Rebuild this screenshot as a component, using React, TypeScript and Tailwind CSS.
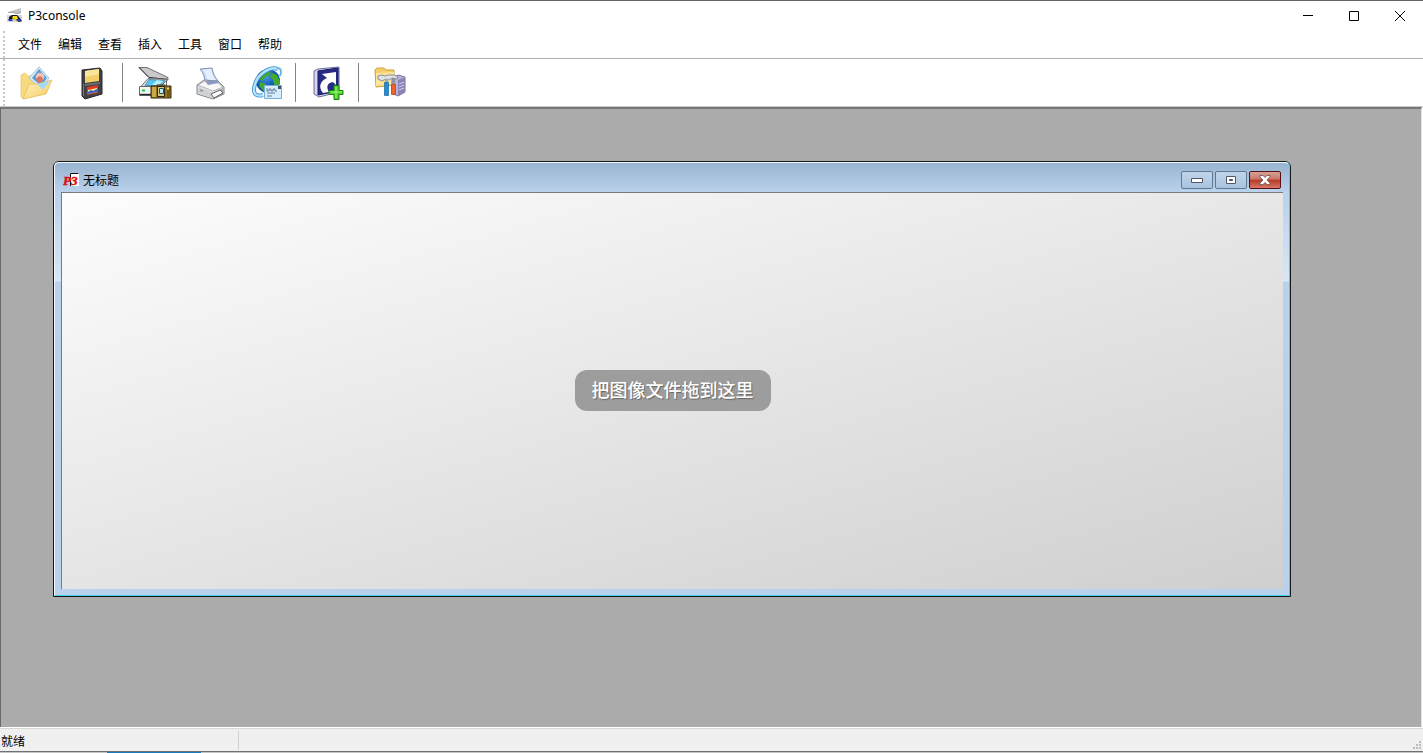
import type { ReactNode } from 'react'

const menus = ['文件', '编辑', '查看', '插入', '工具', '窗口', '帮助']

function AppIcon() {
  return (
    <svg width="16" height="16" viewBox="0 0 16 16">
      <path d="M1 4L14 0v5l-3 1-5-1z" fill="#c4c4c4" />
      <path d="M1 4.5h6l2 1 5-1" fill="none" stroke="#999" strokeWidth=".8" />
      <path d="M0 7h15v7H0z" fill="#d6d6d6" />
      <path d="M2 9l3-2h5l2 2 3 4-3 1-3-2-3-1-4 1z" fill="#16161c" />
      <path d="M6 8h4l1 3-3 1-3-2z" fill="#f3dc18" />
      <path d="M10 11h4v2h-4zM1 11h3l2 2H2z" fill="#2736b8" />
    </svg>
  )
}

function FolderIcon() {
  return (
    <svg width="34" height="36" viewBox="0 0 34 36">
      <defs>
        <linearGradient id="folder" x1="0" y1="0" x2="1" y2="1">
          <stop stopColor="#fff3bd" />
          <stop offset="1" stopColor="#f5cb62" />
        </linearGradient>
      </defs>
      <path d="M2 10l4-2 3 3 10-1v14L5 34l-3-2z" fill="#f8db80" stroke="#e8c469" strokeWidth=".7" />
      <path d="M20 2l10 11-8 11-12-11z" fill="#d9edf9" stroke="#93b7d2" strokeWidth=".8" />
      <path d="M20 4l8 9-6 8-9-8z" fill="#5a9cd8" />
      <circle cx="21" cy="12" r="4.2" fill="#f6c4b2" />
      <path d="M17 15c1-5 7-5 7 0l-3 4z" fill="#d57767" />
      <path d="M4 34l6-15h8l15-4-6 14z" fill="url(#folder)" stroke="#e3bb5c" strokeWidth=".8" />
      <path d="M18 19l13-3-7 9z" fill="#a6d8f7" />
    </svg>
  )
}

function FloppyIcon() {
  return (
    <svg width="26" height="34" viewBox="0 0 26 34">
      <path d="M3 4l18-2 2 3v23L6 33l-3-3z" fill="#414145" stroke="#28282c" />
      <path d="M6 5l14-2v12L6 17z" fill="#f2cf69" />
      <path d="M6 5l14-2v5L6 11z" fill="#fae59d" />
      <path d="M6 18l15-2v2L6 20z" fill="#6d6d72" />
      <path d="M8 21l11-2v8L8 29z" fill="#e13a21" />
      <path d="M9 24l9-2v4l-9 2z" fill="#f8e7a0" />
      <path d="M9 26l3-2 2 1 4-2v3l-9 2z" fill="#355fbd" />
      <path d="M4.5 18v12" stroke="#77777c" />
    </svg>
  )
}

function ScannerIcon() {
  return (
    <svg width="36" height="34" viewBox="0 0 36 34">
      <path d="M2 1.5h8l21 10v2l-19-2z" fill="#c9c9cb" stroke="#555558" strokeWidth=".8" />
      <path d="M2 1.5l10 10 19 2" fill="none" stroke="#333336" />
      <path d="M11 12.5l20 1-7 8H3z" fill="#dededf" stroke="#77777b" />
      <path d="M12 13.5l16 1-5 5H8z" fill="#58c6ed" stroke="#397a99" strokeWidth=".7" />
      <path d="M20 14l6 1-4 4h-7z" fill="#b3efff" />
      <path d="M2.5 20.5h21l6-6v8l-6 7h-21z" fill="#f3f3f4" stroke="#68686c" />
      <path d="M3 28.5h20" stroke="#26262a" strokeWidth="1.4" />
      <path d="M5 24.5h3" stroke="#24c34c" strokeWidth="2" />
      <path d="M14 20h6v-1h8v1h6v12H14z" fill="#94741f" stroke="#332b16" />
      <path d="M15 21h4v10h-4z" fill="#c8a945" />
      <path d="M30 21h3v10h-3z" fill="#765914" />
      <path d="M20.5 20.5h7v10h-7z" fill="#d7c783" stroke="#302713" />
      <path d="M22.5 22.5h4v5h-4z" fill="#b8ecef" stroke="#24575b" />
      <path d="M30 22.5h2" stroke="#f0dd78" strokeWidth="2" />
    </svg>
  )
}

function PrinterIcon() {
  return (
    <svg width="32" height="34" viewBox="0 0 32 34">
      <path d="M5 3l12-1c1 6 3 9 6 13l-12 2C9 12 9 7 5 3z" fill="#c6dcfa" stroke="#8393b5" />
      <path d="M8 4l8-1c1 6 3 8 5 11l-8 1C11 10 11 7 8 4z" fill="#e4f0ff" />
      <path d="M2 19l7-5 14 1 6 6v7l-11 5L2 28z" fill="#dedee2" stroke="#86868c" />
      <path d="M3 19l7-4 12 1 6 5-10 4z" fill="#f7f7f8" stroke="#aaaab0" strokeWidth=".8" />
      <path d="M10 15l12-1 2 3-11 2z" fill="#8a9ac0" />
      <path d="M3 21l15 6v5L3 27z" fill="#cfcfd5" />
      <path d="M18 27l10-5v6l-10 4z" fill="#a4a4ad" />
      <path d="M16 28l9-4 3 3-9 5z" fill="#fafafb" stroke="#62626b" />
      <path d="M5 24l3 1" stroke="#7c9f7d" strokeWidth="1.4" />
    </svg>
  )
}

function GlobeIcon() {
  return (
    <svg width="34" height="36" viewBox="0 0 34 36">
      <defs>
        <radialGradient id="globe" cx="40%" cy="30%">
          <stop stopColor="#4a9eea" />
          <stop offset="1" stopColor="#0b4eaa" />
        </radialGradient>
      </defs>
      <circle cx="18" cy="16" r="12" fill="url(#globe)" />
      <path d="M12 6l6-1 3 3-3 3-3 1-2 4-4-2 1-5zM22 8l5 2 3 6-2 6-4-2-1-5-3-3zM10 17l6 2 1 5-3 3-5-6z" fill="#43a92e" />
      <path d="M28 4C20 1 8 9 5 19s1 13 8 11" fill="none" stroke="#2f8bd0" strokeWidth="4" />
      <path d="M28 4C20 1 8 9 5 19s1 13 8 11" fill="none" stroke="#b5e3fa" strokeWidth="2.4" />
      <path d="M27 3c4 0 5 3 3 8" fill="none" stroke="#65b9e8" strokeWidth="2" />
      <path d="M14.5 20.5h17v13h-17z" fill="#d8edfc" stroke="#78afd4" />
      <path d="M28 21h3v3h-3z" fill="#3f5563" />
      <path d="M17 23v3h2v-2h2v2h2v-2h2v2h2M17 28h8M17 31h5" fill="none" stroke="#607f9e" />
    </svg>
  )
}

function ShortcutIcon() {
  return (
    <svg width="34" height="36" viewBox="0 0 34 36">
      <path d="M3 6l4-2 21-2v25L8 32l-5-3z" fill="#d6d7ec" stroke="#686ba2" />
      <path d="M7 6l20-3v23L7 30z" fill="#282b84" stroke="#151961" />
      <path d="M11 9l14-2v13l-3-3c-6 1-7 5-4 10l-6 1c-5-6-3-12 4-15z" fill="#fff" />
      <path d="M23 20.500h5v5h4v4h-4v5h-5v-5h-5v-4h5z" fill="#4fce2e" stroke="#17850f" />
      <path d="M25 22v11M20 27h11" stroke="#a4fa75" />
    </svg>
  )
}

function ToolsIcon() {
  return (
    <svg width="34" height="34" viewBox="0 0 34 34">
      <path d="M1 4l2-2h7l2 2h8v15L2 21z" fill="#f3cf6b" stroke="#ce9f3c" />
      <path d="M2 7l18-1v12L2 20z" fill="#fce59a" />
      <path d="M18 13l6-4 7 2v15l-7 4-6-3z" fill="#b8b4dc" stroke="#77729f" />
      <path d="M24 14l7-3v15l-7 4z" fill="#8a84b5" />
      <path d="M25 18l5-2M25 21l5-2M25 24l5-2" stroke="#d6d3ed" />
      <path d="M4 10l4-1 3 1 3-1h6l4 2-1 2-5-1-3 2-3-1-4 2-4-2z" fill="#e0e1e5" stroke="#8b8e95" />
      <path d="M11 13h3v4h-3z" fill="#a5abb4" />
      <path d="M10.500 16.500h4v13h-4z" fill="#268bd2" stroke="#15659e" strokeWidth=".7" />
      <path d="M19 12h2v6h-2z" fill="#8b9099" />
      <path d="M17.500 18.500h4v10h-4z" fill="#ef622b" stroke="#aa3e14" strokeWidth=".7" />
    </svg>
  )
}

function DocumentIcon() {
  return (
    <svg width="16" height="16" viewBox="0 0 16 16">
      <path d="M7 1h9v13H7z" fill="#fff" />
      <path d="M7.500 14V1.500h8" fill="none" stroke="#111" />
      <text x="0" y="13" fill="#e00d12" stroke="#e00d12" strokeWidth=".5" fontFamily="Liberation Serif, serif" fontSize="13" fontStyle="italic" fontWeight="700">P3</text>
    </svg>
  )
}

function Separator() {
  return <div className="h-[39px] w-px bg-[#858585]" />
}

function Grip() {
  return <div className="ml-[3px] w-0 self-stretch border-l-2 border-dotted border-[#c8c8c8]" />
}

function ToolButton({ label, children }: { label: string; children: ReactNode }) {
  return (
    <button type="button" aria-label={label} className="flex h-10 w-14 items-center justify-center">
      {children}
    </button>
  )
}

export default function App() {
  return (
    <div className="flex h-screen flex-col border-t border-[#666] bg-white font-['Noto_Sans','Noto_Sans_CJK_SC',sans-serif] text-xs text-black">
      <header className="flex h-[30px] shrink-0 items-center pl-[7px]">
        <AppIcon />
        <h1 className="ml-[5px] grow">P3console</h1>
        <button type="button" aria-label="最小化" className="flex h-full w-[46px] items-center justify-center">
          <svg width="10" height="10" viewBox="0 0 10 10"><path d="M0 4.500h10" stroke="#000" /></svg>
        </button>
        <button type="button" aria-label="最大化" className="flex h-full w-[46px] items-center justify-center">
          <svg width="10" height="10" viewBox="0 0 10 10"><path d="M.5.5h9v9h-9z" fill="none" stroke="#000" /></svg>
        </button>
        <button type="button" aria-label="关闭" className="flex h-full w-[46px] items-center justify-center">
          <svg width="10" height="10" viewBox="0 0 10 10"><path d="M0 0l10 10M10 0L0 10" stroke="#000" /></svg>
        </button>
      </header>

      <nav className="flex h-7 shrink-0 items-center border-b border-[#b0b0b4]">
        <Grip />
        <div className="ml-[5px] flex">
          {menus.map((name) => (
            <button key={name} type="button" className="w-10 text-center">{name}</button>
          ))}
        </div>
      </nav>

      <div className="flex h-12 shrink-0 items-center border-b border-[#c8c8c8]">
        <Grip />
        <div className="ml-[3px] flex items-center">
          <div className="flex pr-[2px]">
            <ToolButton label="打开"><FolderIcon /></ToolButton>
            <ToolButton label="保存"><FloppyIcon /></ToolButton>
          </div>
          <Separator />
          <div className="flex pl-1">
            <ToolButton label="扫描"><ScannerIcon /></ToolButton>
            <ToolButton label="打印"><PrinterIcon /></ToolButton>
            <ToolButton label="发送"><GlobeIcon /></ToolButton>
          </div>
          <Separator />
          <div className="pr-[2px] pl-1">
            <ToolButton label="快捷方式"><ShortcutIcon /></ToolButton>
          </div>
          <Separator />
          <div className="pl-1">
            <ToolButton label="选项"><ToolsIcon /></ToolButton>
          </div>
        </div>
      </div>

      <main className="mr-px flex min-h-0 grow flex-col border-t-2 border-l border-r border-t-[#777] border-r-[#e3e3e3] border-l-[#696969] bg-[#ababab] pt-[52px] pr-[130px] pb-[130px] pl-[52px]">
        <section className="flex min-h-0 grow flex-col rounded-t-md border border-[#151719] bg-[#b9d1ea]">
          <div className="flex grow flex-col rounded-t-[5px] border border-t-[#f2f8fd] border-r-[#3fd0ea] border-b-[#3fd0ea] border-l-[#f2f8fd] bg-[linear-gradient(#99b4d1,#b9d1ea_28px,#d8e6f5_118px,#b9d1ea_119px)] px-[6px] pb-[6px]">
            <div className="flex h-[29px] shrink-0 items-center pt-1 pr-[2px] pl-[2px]">
              <DocumentIcon />
              <h2 className="ml-1 grow pt-[2px]">无标题</h2>
              <div className="flex gap-[2px]">
                <button type="button" aria-label="最小化窗口" className="flex h-[18px] w-8 items-center justify-center rounded-xs border border-[#617891] bg-gradient-to-b from-[#c0d5ea] to-[#a8c3df]">
                  <svg width="12" height="6" viewBox="0 0 12 6"><path d="M.5 1.500h11v4H.5z" fill="#fff" stroke="#535666" /></svg>
                </button>
                <button type="button" aria-label="最大化窗口" className="flex h-[18px] w-8 items-center justify-center rounded-xs border border-[#617891] bg-gradient-to-b from-[#c0d5ea] to-[#a8c3df]">
                  <svg width="12" height="10" viewBox="0 0 12 10"><path d="M1.500 1.500h9v7h-9z" fill="#fff" stroke="#535666" /><path d="M4.500 4.500h3v1h-3z" fill="#9db8d4" stroke="#535666" /></svg>
                </button>
                <button type="button" aria-label="关闭窗口" className="flex h-[18px] w-8 items-center justify-center rounded-xs border border-[#541016] bg-[linear-gradient(#d8a196,#cb7565_45%,#b73825_50%,#d77865)]">
                  <svg width="12" height="10" viewBox="0 0 12 10"><path d="M1 .5h3l2 2 2-2h3v1L8 5l3 3v1.500H8l-2-2-2 2H1V8l3-3-3-3z" fill="#fff" stroke="#61505a" strokeWidth=".8" /></svg>
                </button>
              </div>
            </div>
            <div className="flex grow items-center justify-center border-t border-l border-[#777b80] bg-[linear-gradient(164deg,#fdfdfd,#cfcfcf)] pb-[2px]">
              <p className="rounded-xl bg-[#9d9d9d] px-[17px] pt-[6px] pb-[8px] font-['Noto_Sans_CJK_SC',sans-serif] text-[18px] leading-[27px] font-medium text-white [text-shadow:1px_1px_1px_#666]">
                把图像文件拖到这里
              </p>
            </div>
          </div>
        </section>
      </main>

      <footer className="shrink-0 bg-[#f0f0f0]">
        <div className="h-[2px] border-b border-[#d7d7d7] bg-white" />
        <div className="flex h-[22px] items-center">
          <div className="flex h-[19px] w-[239px] items-center border-r border-[#d0d0d0] pt-[3px] pl-px">就绪</div>
          <div className="grow" />
          <svg className="mt-[10px] mr-[2px]" width="8" height="8" viewBox="0 0 8 8" fill="#bcbcbc">
            <path d="M6 0h2v2H6zM3 3h2v2H3zM6 3h2v2H6zM0 6h2v2H0zM3 6h2v2H3zM6 6h2v2H6z" />
          </svg>
        </div>
        <div className="h-[2px] border-t border-[#707070] bg-[#c5c5c5] pl-[107px]">
          <div className="h-px w-[94px] bg-[#1879bd]" />
        </div>
      </footer>
    </div>
  )
}
